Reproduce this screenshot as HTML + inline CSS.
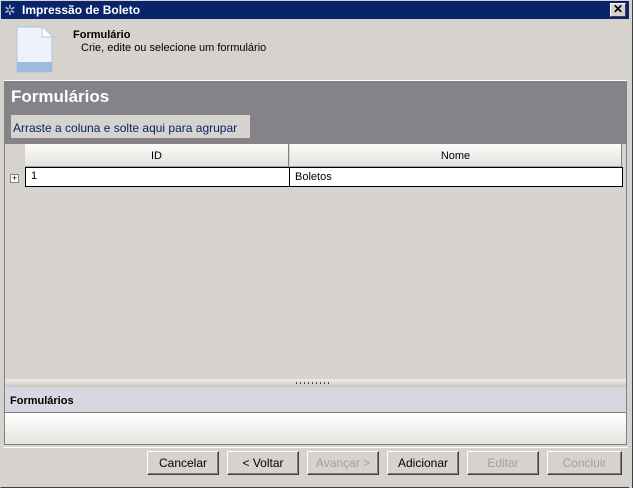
<!DOCTYPE html><html><head><style>
*{margin:0;padding:0;box-sizing:border-box}
body{width:633px;height:488px;background:#d6d3ce;font-family:"Liberation Sans",sans-serif;font-size:11px;position:relative;overflow:hidden}
.abs{position:absolute}
.btn{position:absolute;top:451px;height:24px;width:72px;background:#d6d3ce;border:1px solid;border-color:#fff #404040 #404040 #fff;box-shadow:inset -1px -1px 0 #808080;text-align:center;line-height:22px;font-size:12px;color:#000}
.dis{color:#a0a0a0}
</style></head><body>
<div class="abs" style="left:0;top:0;width:633px;height:488px;border:1px solid;border-color:#d6d3ce #404040 #404040 #d6d3ce"></div>
<div class="abs" style="left:1px;top:1px;width:628px;height:18px;background:#0a246a"></div>
<div class="abs" style="left:4px;top:2px;color:#a6b4d6;font-size:14px">✲</div>
<div class="abs" style="left:22px;top:3px;color:#fff;font-weight:bold;font-size:12px">Impressão de Boleto</div>
<div class="abs" style="left:610px;top:3px;width:16px;height:14px;background:#d6d3ce;border:1px solid;border-color:#fff #404040 #404040 #fff;font-size:12px;line-height:11px;text-align:center;font-weight:bold">✕</div>
<div class="abs" style="left:629px;top:0;width:4px;height:488px;background:#d6d3ce;border-right:1px solid #404040"></div>
<svg class="abs" style="left:16px;top:26px" width="40" height="47"><path d="M1 1H26L36 11V46H1Z" fill="#eef3fb" stroke="#b0c4de"/><rect x="1" y="36" width="35" height="10" fill="#9dbbe0"/><path d="M26 1V11H36" fill="#fff" stroke="#b0c4de"/></svg>
<div class="abs" style="left:73px;top:29px;font-weight:bold;font-size:11px">Formulário</div>
<div class="abs" style="left:81px;top:42px">Crie, edite ou selecione um formulário</div>
<div class="abs" style="left:4px;top:80px;width:623px;height:1px;background:#fff"></div>
<div class="abs" style="left:4px;top:81px;width:623px;height:298px;background:#d6d3ce;border-left:1px solid #808080;border-right:1px solid #808080"></div>
<div class="abs" style="left:5px;top:81px;width:621px;height:63px;background:#858387"></div>
<div class="abs" style="left:11px;top:87px;color:#fff;font-weight:bold;font-size:17px">Formulários</div>
<div class="abs" style="left:11px;top:115px;width:239px;height:23px;background:#d6d3ce;color:#0a246a;font-size:12px;line-height:26px;padding-left:2px">Arraste a coluna e solte aqui para agrupar</div>
<div class="abs" style="left:25px;top:144px;width:264px;height:23px;background:linear-gradient(#fbfbfa,#e4e2dd);border-right:1px solid #808080;border-bottom:1px solid #a0a0a0;text-align:center;line-height:24px;font-size:11px">ID</div>
<div class="abs" style="left:290px;top:144px;width:332px;height:23px;background:linear-gradient(#fbfbfa,#e4e2dd);border-right:1px solid #808080;border-bottom:1px solid #a0a0a0;text-align:center;line-height:24px;font-size:11px">Nome</div>
<div class="abs" style="left:25px;top:167px;width:598px;height:20px;background:#fff;border:1px solid #000"></div>
<div class="abs" style="left:289px;top:167px;width:1px;height:20px;background:#000"></div>
<div class="abs" style="left:31px;top:170px;font-size:11px">1</div>
<div class="abs" style="left:295px;top:171px;font-size:11px">Boletos</div>
<div class="abs" style="left:10px;top:174px;width:9px;height:9px;border:1px solid #808080;background:#fff;font-size:9px;line-height:7px;text-align:center">+</div>
<div class="abs" style="left:4px;top:379px;width:623px;height:8px;background:linear-gradient(#f0efec,#c9c6c0);border-left:1px solid #808080;border-right:1px solid #808080"></div>
<div class="abs" style="left:296px;top:382px;width:35px;height:2px;background:repeating-linear-gradient(90deg,#404040 0 1px,transparent 1px 4px)"></div>
<div class="abs" style="left:4px;top:387px;width:623px;height:26px;background:#d6d7e0;border:1px solid #808080;border-top:none;border-bottom:1px solid #808080;padding:8px 0 0 5px;font-weight:bold;font-size:11px">Formulários</div>
<div class="abs" style="left:4px;top:413px;width:623px;height:32px;background:linear-gradient(#fff,#e6e4e0);border:1px solid #808080;border-top:none"></div>
<div class="abs" style="left:3px;top:447px;width:625px;height:1px;background:#a0a0a0;border-bottom:1px solid #fff"></div>
<div class="btn" style="left:147px">Cancelar</div>
<div class="btn" style="left:227px">&lt; Voltar</div>
<div class="btn dis" style="left:307px">Avançar &gt;</div>
<div class="btn" style="left:387px">Adicionar</div>
<div class="btn dis" style="left:467px">Editar</div>
<div class="btn dis" style="left:547px;width:75px">Concluir</div>
</body></html>
